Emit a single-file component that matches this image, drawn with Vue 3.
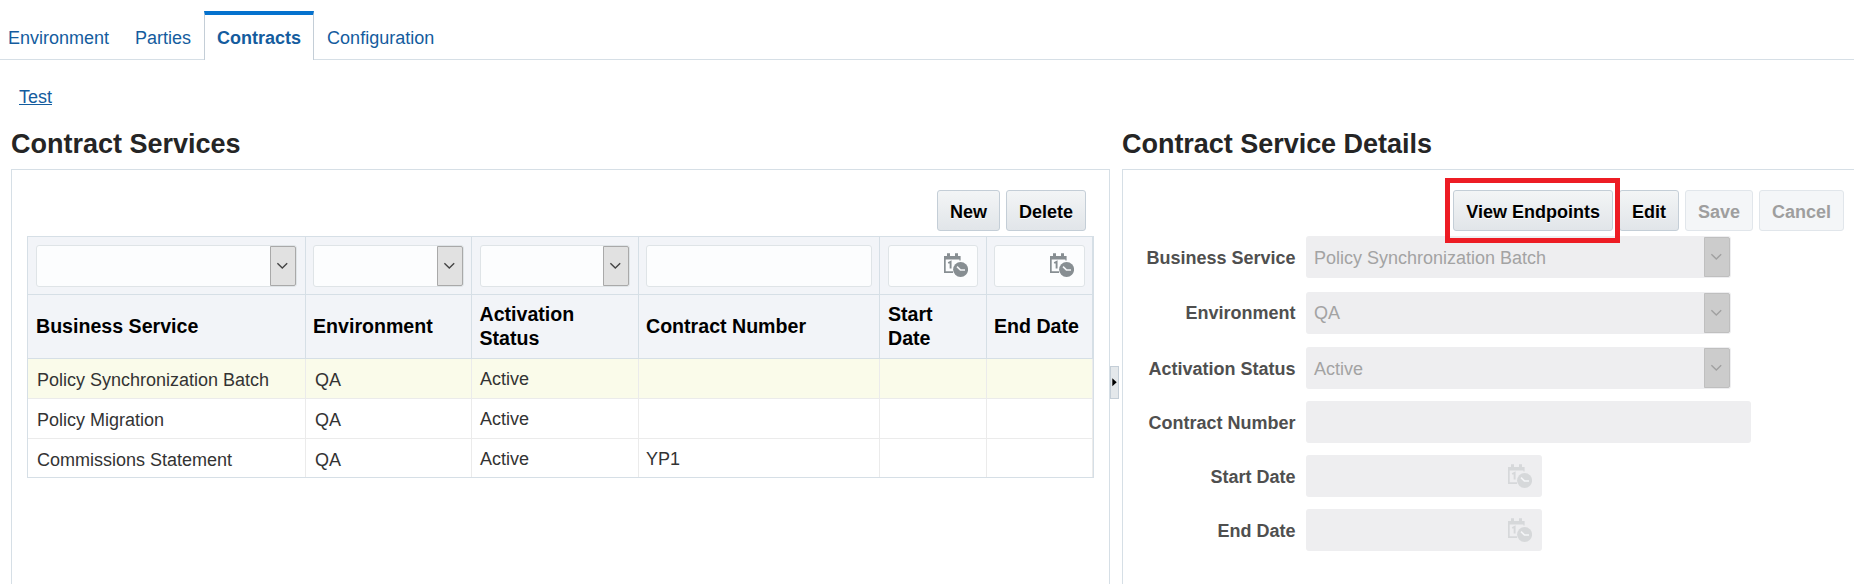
<script setup>
import { ref, h } from "vue";

const tabs = ["Environment", "Parties", "Contracts", "Configuration"];
const activeTab = ref("Contracts");

const columns = [
  { key: "service", label: "Business Service", filter: "select" },
  { key: "environment", label: "Environment", filter: "select" },
  { key: "status", label: "Activation Status", filter: "select" },
  { key: "number", label: "Contract Number", filter: "text" },
  { key: "start", label: "Start Date", filter: "date" },
  { key: "end", label: "End Date", filter: "date" },
];

const services = ref([
  { id: 1, service: "Policy Synchronization Batch", environment: "QA", status: "Active" },
  { id: 2, service: "Policy Migration", environment: "QA", status: "Active" },
  { id: 3, service: "Commissions Statement", environment: "QA", status: "Active", number: "YP1" },
]);
const selectedId = ref(1);
const selected = () => {
  return services.value.find((s) => s.id === selectedId.value);
};

// dropdown arrow
const Chevron = () =>
  h("svg", { width: 24, height: 38, viewBox: "0 0 24 38" }, [
    h("path", {
      d: "M6.4 16.2 11.3 21.1 16.2 16.2",
      fill: "none",
      stroke: "currentColor",
      "stroke-width": 1.4,
    }),
  ]);

// calendar with a clock in the corner
const DateIcon = () =>
  h("svg", { width: 24, height: 24, viewBox: "0 0 24 24" }, [
    h("path", {
      d: "M0 3h3V0.3h3V3h5V0.3h3V3h2.6v4.6h-1.2V6.5H1.7v11.8H9V20H0z",
      fill: "currentColor",
    }),
    h("path", {
      d: "M4.2 10 6.6 8.8V15.6",
      fill: "none",
      stroke: "currentColor",
      "stroke-width": 1.9,
    }),
    h("circle", { cx: 16.6, cy: 16.5, r: 7.5, fill: "currentColor" }),
    h("path", {
      d: "M13 13.6 16.4 16.9H21",
      fill: "none",
      stroke: "#f4f5f7",
      "stroke-width": 1.5,
    }),
  ]);
</script>
<template>
  <main>
    <nav class="tabs">
      <a
        v-for="tab in tabs"
        :key="tab"
        class="tab"
        :class="{ active: tab === activeTab }"
        @click="activeTab = tab"
        >{{ tab }}</a
      >
    </nav>
    <div class="crumb"><a class="link">Test</a></div>
    <div class="split">
      <section class="left">
        <h2>Contract Services</h2>
        <div class="panel">
          <div class="toolbar">
            <button>New</button>
            <button>Delete</button>
          </div>
          <table>
            <colgroup>
              <col v-for="col in columns" :key="col.key" :class="col.key" />
            </colgroup>
            <thead>
              <tr class="filters">
                <td v-for="col in columns" :key="col.key">
                  <div class="field">
                    <span v-if="col.filter === 'select'" class="arrow"><Chevron /></span>
                    <DateIcon v-if="col.filter === 'date'" class="date" />
                  </div>
                </td>
              </tr>
              <tr class="labels">
                <th v-for="col in columns" :key="col.key">{{ col.label }}</th>
              </tr>
            </thead>
            <tbody>
              <tr
                v-for="item in services"
                :key="item.id"
                :class="{ selected: item.id === selectedId }"
                @click="selectedId = item.id"
              >
                <td v-for="col in columns" :key="col.key">{{ item[col.key] }}</td>
              </tr>
            </tbody>
          </table>
        </div>
      </section>
      <div class="splitter">
        <div class="handle">
          <svg width="5" height="9" viewBox="0 0 5 9"><path d="M0.3 0.3 4.7 4.3 0.3 8.3z" /></svg>
        </div>
      </div>
      <section class="right">
        <h2>Contract Service Details</h2>
        <div class="panel">
          <div class="toolbar">
            <div class="marked"><button>View Endpoints</button></div>
            <button>Edit</button>
            <button disabled>Save</button>
            <button disabled>Cancel</button>
          </div>
          <div class="form">
            <label>Business Service</label>
            <div class="field off select">
              <span class="value">{{ selected().service }}</span>
              <span class="arrow"><Chevron /></span>
            </div>
            <label class="up">Environment</label>
            <div class="field off select up">
              <span class="value">{{ selected().environment }}</span>
              <span class="arrow"><Chevron /></span>
            </div>
            <label>Activation Status</label>
            <div class="field off select">
              <span class="value">{{ selected().status }}</span>
              <span class="arrow"><Chevron /></span>
            </div>
            <label>Contract Number</label>
            <div class="field off wide">
              <span class="value">{{ selected().number }}</span>
            </div>
            <label>Start Date</label>
            <div class="field off short"><DateIcon class="date" /></div>
            <label>End Date</label>
            <div class="field off short"><DateIcon class="date" /></div>
          </div>
        </div>
      </section>
    </div>
  </main>
</template>

<style>
body {
  background: #fff;
  overflow: hidden;
}
</style>

<style scoped>
main {
  height: 584px;
  overflow: hidden;
  display: flex;
  flex-direction: column;
  font-family: "Liberation Sans", Arial, sans-serif;
  font-size: 18px;
  color: #333;
}

main * {
  box-sizing: border-box;
}

svg {
  display: block;
}

.tabs {
  display: flex;
  height: 60px;
  padding-top: 11px;
  flex: none;
  background: linear-gradient(#d6dfe6, #d6dfe6) 0 100% / 100% 1px no-repeat;
}

.tab {
  padding: 17px 13px 0;
  line-height: 20px;
  color: #145c9e;
  cursor: pointer;
}

.tab:first-child {
  padding-left: 8px;
}

.tab.active {
  padding: 13px 12px 0;
  border: 1px solid #c4ced7;
  border-top: 4px solid #0572ce;
  border-bottom: 0;
  background: #fff;
  font-weight: bold;
}

.crumb {
  height: 64px;
  flex: none;
  padding: 27px 0 0 19px;
  line-height: 20px;
}

.link {
  color: #145c9e;
  text-decoration: underline;
  text-decoration-thickness: 1px;
  text-underline-offset: 1px;
}

.split {
  display: flex;
  flex: 1;
  padding-left: 11px;
}

section {
  display: flex;
  flex-direction: column;
}

.left {
  width: 1099px;
}

.right {
  flex: 1;
}

h2 {
  height: 45px;
  margin: 0;
  padding-top: 5px;
  font-size: 27px;
  line-height: 31px;
  color: #252525;
}

.right h2 {
  letter-spacing: -0.03px;
}

.panel {
  flex: 1;
  border: 1px solid #d6dfe6;
  border-bottom: 0;
  padding-top: 20px;
}

.left .panel {
  padding-left: 15px;
}

.right .panel {
  border-right: 0;
}

.toolbar {
  display: flex;
  justify-content: flex-end;
  gap: 6px;
  padding-right: 23px;
  margin-bottom: 5px;
}

.right .toolbar {
  padding-right: 10px;
}

button {
  height: 41px;
  padding: 3px 12px 0;
  border: 1px solid #c4ced7;
  border-radius: 3px;
  background: linear-gradient(#f3f5f6, #e1e5e9);
  font: bold 18px "Liberation Sans", Arial, sans-serif;
  color: #000;
  text-shadow: 0 1px 0 #fff;
}

button:disabled {
  border-color: #e1e6eb;
  background: #f4f6f8;
  color: #9e9e9e;
  text-shadow: none;
}

/* red frame drawn over the neighbouring controls */
.marked {
  position: relative;
}

.marked::after {
  content: "";
  position: absolute;
  inset: -12px -7px -12px -8px;
  border: 5px solid #ed1c24;
}

table {
  width: 1067px;
  table-layout: fixed;
  border-collapse: separate;
  border-spacing: 0;
  border: 1px solid #d6dfe6;
}

col.service {
  width: 278px;
}

col.environment {
  width: 166px;
}

col.status {
  width: 167px;
}

col.number {
  width: 241px;
}

col.start {
  width: 107px;
}

col.end {
  width: 106px;
}

td,
th {
  padding: 0 8px;
  border-right: 1px solid #ebebeb;
  border-bottom: 1px solid #ebebeb;
  text-align: left;
  vertical-align: middle;
}

td:nth-child(even) {
  padding: 0 7px;
}

thead td,
thead th {
  background: #f2f4f8;
  border-color: #d6dfe6;
}

.filters td {
  height: 58px;
}

.labels th {
  height: 64px;
  padding: 0 7px 2px 8px;
  font-size: 19.6px;
  line-height: 24px;
  color: #000;
}

.labels th:nth-child(even) {
  padding-left: 7px;
}

.labels th:nth-child(3) {
  padding-left: 7.5px;
}

tbody td {
  height: 40px;
  padding-top: 10px;
  line-height: 20px;
  vertical-align: top;
}

tbody td:nth-child(even) {
  padding-top: 10px;
}

tbody td:nth-child(-n + 2) {
  padding-top: 11px;
  padding-left: 9px;
}

tbody tr:last-child td {
  height: 38px;
  border-bottom: 0;
}

.selected td {
  background: #fafbea;
}

.field {
  display: flex;
  align-items: center;
  height: 42px;
  border: 1px solid #dfe4e7;
  border-radius: 3px;
  background: #fcfdfe;
}

.arrow {
  width: 26px;
  height: 40px;
  margin-left: auto;
  border: 1px solid #a9a9a9;
  border-radius: 0 2px 2px 0;
  background: #e1e1e1;
  color: #444;
}

.date {
  margin: 0 9px 2px auto;
  color: #878e92;
}

td:nth-child(6) .date {
  margin-right: 10px;
}

.splitter {
  width: 12px;
  padding-top: 242px;
}

.handle {
  display: flex;
  align-items: center;
  justify-content: flex-end;
  width: 9px;
  height: 33px;
  padding-right: 1px;
  border: 1px solid #c4ced7;
  background: #e4e8eb;
}

.form {
  display: grid;
  grid-template-columns: 172.5px 1fr;
  grid-template-rows: 56px 55px repeat(3, 54px) 42px;
  column-gap: 10.5px;
}

label {
  padding-top: 12px;
  line-height: 20px;
  font-weight: bold;
  text-align: right;
  color: #4f4f4f;
}

label.up {
  padding-top: 11px;
}

.off {
  padding-left: 8px;
  border: 0;
  background: #eeeef0;
  color: #a3a3a3;
}

.value {
  padding-top: 2px;
  line-height: 20px;
}

.up .value {
  padding-top: 0;
}

.off.select {
  width: 425px;
  padding-right: 1px;
}

.off.wide {
  width: 445px;
}

.off.short {
  width: 236px;
}

.off .arrow {
  border-color: #bfbfbf;
  background: #ccc;
  color: #a0a0a0;
}

.off .date {
  margin: 0 10px 0 auto;
  color: #d6d8da;
}
</style>
